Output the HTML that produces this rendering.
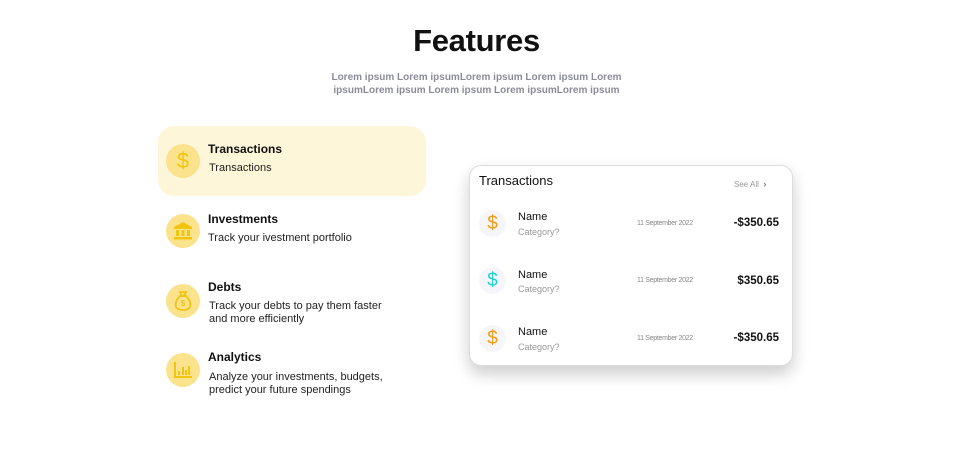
<!DOCTYPE html>
<html><head><meta charset="utf-8"><style>
*{margin:0;padding:0;box-sizing:border-box}
body{width:953px;height:470px;background:#fff;font-family:"Liberation Sans",sans-serif;position:relative;overflow:hidden;color:#111}
.a{position:absolute}
h1{position:absolute;left:0;width:953px;top:23px;text-align:center;font-size:31px;font-weight:bold;letter-spacing:-0.3px}
.sub{left:0;width:953px;top:71px;text-align:center;font-size:10px;font-weight:bold;color:#8a8d99;line-height:13px}
.hl{left:158px;top:126px;width:268px;height:70px;background:#fdf6d9;border-radius:16px}
.ic{width:34px;height:34px;border-radius:50%;background:#fae38c;display:flex;align-items:center;justify-content:center}
.t{font-size:12px;font-weight:bold;color:#111}
.d{font-size:11px;color:#222;line-height:13px}
.card{left:469px;top:165px;width:324px;height:201px;background:#fff;border-radius:12px;border:1px solid #ddd;box-shadow:0 8px 16px rgba(0,0,0,.2)}
.ci{width:27px;height:27px;border-radius:50%;background:#f6f6fa;display:flex;align-items:center;justify-content:center;font-size:19px}
.nm{font-size:11px;color:#111}
.cat{font-size:9px;color:#999}
.dt{font-size:7px;color:#888;letter-spacing:-0.3px}
.am{font-size:11.5px;color:#111;text-align:right;width:80px;font-weight:600}
</style></head><body>
<h1>Features</h1>
<div class="a sub">Lorem ipsum Lorem ipsumLorem ipsum Lorem ipsum Lorem<br>ipsumLorem ipsum Lorem ipsum Lorem ipsumLorem ipsum</div>
<div class="a hl"></div>

<div class="a ic" style="left:166px;top:144px"><span style="color:#f1c40f;font-size:22px">$</span></div>
<div class="a t" style="left:208px;top:142px">Transactions</div>
<div class="a d" style="left:209px;top:162px">Transactions</div>

<div class="a ic" style="left:166px;top:214px"><svg width="20" height="18" viewBox="0 0 20 18" fill="#f1c40f"><path d="M10 0L1 5v2h18V5z"/><rect x="3" y="8" width="3" height="6"/><rect x="8.5" y="8" width="3" height="6"/><rect x="14" y="8" width="3" height="6"/><rect x="1" y="15" width="18" height="2.5"/></svg></div>
<div class="a t" style="left:208px;top:212px">Investments</div>
<div class="a d" style="left:208px;top:232px">Track your ivestment portfolio</div>

<div class="a ic" style="left:166px;top:284px"><svg width="18" height="20" viewBox="0 0 18 20" fill="none" stroke="#f1c40f" stroke-width="1.8"><path d="M6 1h6l-2 4h-2z"/><path d="M6 5C2 9 1 13 2 16c1 2 3 3 7 3s6-1 7-3c1-3 0-7-4-11z"/><text x="9" y="15" font-size="8" fill="#f1c40f" stroke="none" text-anchor="middle" font-family="Liberation Sans" font-weight="bold">$</text></svg></div>
<div class="a t" style="left:208px;top:280px">Debts</div>
<div class="a d" style="left:209px;top:300px">Track your debts to pay them faster<br>and more efficiently</div>

<div class="a ic" style="left:166px;top:353px"><svg width="20" height="18" viewBox="0 0 20 18" fill="#f1c40f"><rect x="1" y="1" width="2" height="16"/><rect x="1" y="15" width="18" height="2"/><rect x="5" y="10" width="2" height="4"/><rect x="9" y="6" width="2" height="8"/><rect x="12" y="9" width="2" height="5"/><rect x="15" y="5" width="2" height="9"/></svg></div>
<div class="a t" style="left:208px;top:350px">Analytics</div>
<div class="a d" style="left:209px;top:371px">Analyze your investments, budgets,<br>predict your future spendings</div>

<div class="a card">
<div class="a" style="left:9px;top:7px;font-size:13px">Transactions</div>
<div class="a" style="left:264px;top:13px;font-size:8px;color:#999">See All &nbsp;<b style="font-size:9px;color:#777">›</b></div>

<div class="a ci" style="left:9px;top:44px;color:#f39c12">$</div>
<div class="a nm" style="left:48px;top:45px">Name</div>
<div class="a cat" style="left:48px;top:61px">Category?</div>
<div class="a dt" style="left:167px;top:54px">11 September 2022</div>
<div class="a am" style="left:229px;top:51px">-$350.65</div>

<div class="a ci" style="left:9px;top:101px;color:#1fd1d6">$</div>
<div class="a nm" style="left:48px;top:103px">Name</div>
<div class="a cat" style="left:48px;top:118px">Category?</div>
<div class="a dt" style="left:167px;top:111px">11 September 2022</div>
<div class="a am" style="left:229px;top:109px">$350.65</div>

<div class="a ci" style="left:9px;top:159px;color:#f39c12">$</div>
<div class="a nm" style="left:48px;top:160px">Name</div>
<div class="a cat" style="left:48px;top:176px">Category?</div>
<div class="a dt" style="left:167px;top:169px">11 September 2022</div>
<div class="a am" style="left:229px;top:166px">-$350.65</div>
</div>
</body></html>
